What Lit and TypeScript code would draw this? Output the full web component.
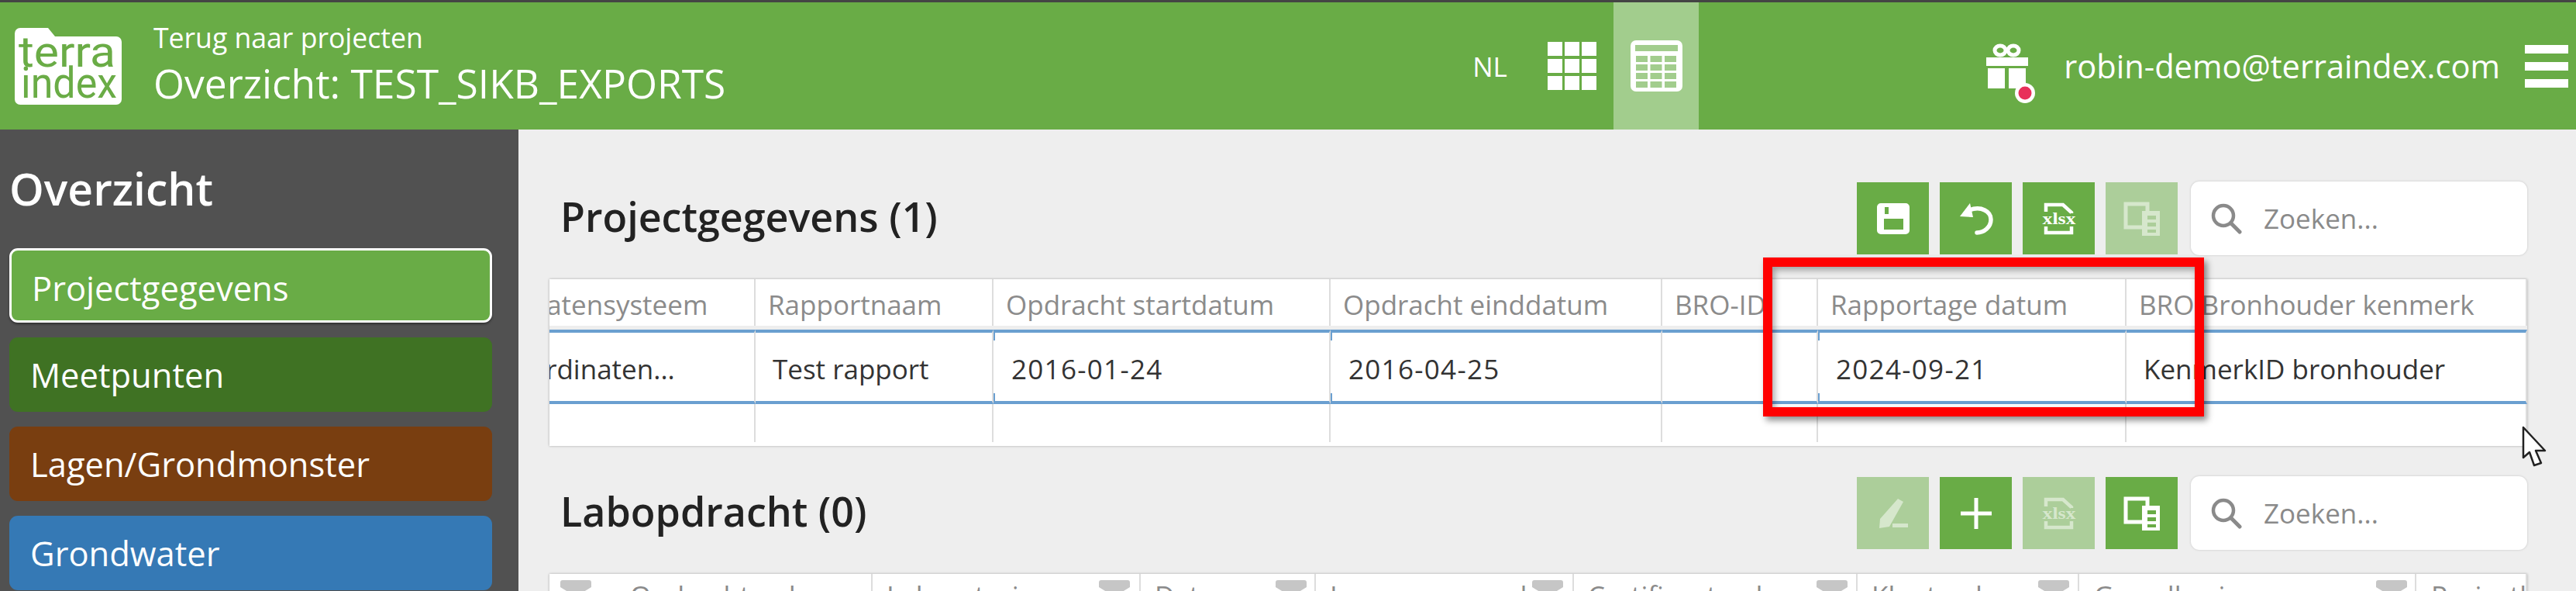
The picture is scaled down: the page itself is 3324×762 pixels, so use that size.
import { LitElement, html, css, svg } from "lit";
import { customElement } from "lit/decorators.js";

const saveIcon = svg`<svg class="ic" width="44" height="42" viewBox="0 0 44 42"><path fill="currentColor" fill-rule="evenodd" d="M6 1h32a5 5 0 0 1 5 5v30a5 5 0 0 1-5 5H6a5 5 0 0 1-5-5V6a5 5 0 0 1 5-5zM11 6v9h5V6zM10 21v14h25V21z"/></svg>`;
const undoIcon = svg`<svg class="ic" width="44" height="42" viewBox="0 0 44 42"><path fill="none" stroke="currentColor" stroke-width="5.5" stroke-linecap="round" d="M13 10C29 4 41 12 41 22 41 32 32 39 23 39"/><path fill="currentColor" d="M1 18 14 1l4 18z"/></svg>`;
const xlsxIcon = svg`<svg class="ic" width="46" height="44" viewBox="0 0 46 44"><path fill="none" stroke="currentColor" stroke-width="4.5" d="M6 13V4h22l11 10v1M6 32v8h33v-8"/><text x="23" y="29" text-anchor="middle" textLength="43" lengthAdjust="spacingAndGlyphs" font-family="'Liberation Serif',serif" font-weight="700" font-size="22" fill="currentColor">xlsx</text></svg>`;
const copyIcon = svg`<svg class="ic" width="48" height="44" viewBox="0 0 48 44"><path fill="none" stroke="currentColor" stroke-width="5" d="M27 33H3V3h28v10"/><path fill="currentColor" fill-rule="evenodd" d="M24 12h23v32H24zM31 18v5h11v-5zM31 27v5h11v-5zM31 36v4h11v-4z"/></svg>`;
const plusIcon = svg`<svg class="ic" width="42" height="42" viewBox="0 0 42 42"><path fill="none" stroke="currentColor" stroke-width="5" d="M21 1v40M1 21h40"/></svg>`;
const penIcon = svg`<svg class="ic" width="42" height="40" viewBox="0 0 42 40"><path fill="currentColor" d="M27 1l7 4-18 32-13 2 1-12zM20 33h20v5H20z"/></svg>`;

const grid = svg`<svg class="nav-ic" width="63" height="62" viewBox="0 0 63 62" fill="#fff">${[0, 1, 2].map((r) => [0, 1, 2].map((c) => svg`<rect x=${c * 22} y=${r * 22} width="19" height="18"/>`))}</svg>`;
const tableIc = svg`<svg class="nav-ic" width="67" height="66" viewBox="0 0 67 66"><rect width="67" height="66" rx="7" fill="#fff"/><rect x="6" y="6" width="55" height="8" fill="#a2cd8d"/>${[0, 1, 2, 3].map((r) => [0, 1, 2].map((c) => svg`<rect x=${7 + c * 18.5} y=${20 + r * 11} width="15" height="8" fill="#a2cd8d"/>`))}</svg>`;
const gift = svg`<svg width="66" height="78" viewBox="0 0 66 78"><g fill="none" stroke="#fff" stroke-width="5"><ellipse cx="18" cy="9" rx="7" ry="6"/><ellipse cx="35" cy="9" rx="7" ry="6"/></g><path fill="#fff" d="M0 18h54v11H0zM2 32h22v26H2zM29 32h22v26H29z"/><circle cx="50" cy="64" r="13" fill="#fff"/><circle cx="50" cy="64" r="8.5" fill="#e8305a"/></svg>`;
const logo = svg`<svg width="138" height="99" viewBox="0 0 138 99"><path fill="#fff" d="M7 0h36l9 11h79a7 7 0 0 1 7 7v74a7 7 0 0 1-7 7H7a7 7 0 0 1-7-7V7a7 7 0 0 1 7-7z"/><g fill="#6aac46" font-family="Roboto,sans-serif" font-size="55"><text x="5" y="50" textLength="125" lengthAdjust="spacingAndGlyphs">terra</text><text x="8" y="90" textLength="124" lengthAdjust="spacingAndGlyphs">index</text></g></svg>`;
const searchIc = svg`<svg width="44" height="40" viewBox="0 0 44 40"><circle cx="18" cy="16" r="13" fill="none" stroke="#8a8a8a" stroke-width="4.5"/><path stroke="#8a8a8a" stroke-width="5" stroke-linecap="round" d="M28 26l11 11"/></svg>`;
const funnel = svg`<svg class="funnel" width="40" height="40" viewBox="0 0 40 40"><path fill="#c6c6c6" d="M3 0h34a3 3 0 0 1 3 3v6L27 17v23H13V17L0 9V3a3 3 0 0 1 3-3z"/></svg>`;
const cursor = svg`<svg class="cursor" width="34" height="54" viewBox="0 0 34 54"><path fill="#fff" stroke="#222" stroke-width="2.5" stroke-linejoin="round" d="M2 2v39l8-7 6 17 9-3-7-16h12z"/></svg>`;

const t1Cols = [416, 307, 435, 428, 201, 398, 517];
const t1Head = ["Coördinatensysteem", "Rapportnaam", "Opdracht startdatum", "Opdracht einddatum", "BRO-ID", "Rapportage datum", "BRO Bronhouder kenmerk"];
const t1Row = ["Coördinaten...", "Test rapport", "2016-01-24", "2016-04-25", "", "2024-09-21", "KenmerkID bronhouder"];
const t1Kind = ["first", "", "date", "date", "", "date", ""];

const t2Cols = [417, 346, 226, 333, 366, 286, 435, 143];
const t2Head = ["Opdrachtcode", "Laboratorium", "Datum", "Lagen en grondmonsters", "Certificaatcode", "Klantcode", "Grondboring", "Projectleider"];
const t2Text = [104, 18, 18, 18, 18, 18, 19, 19];
const t2Funnel = [14, 292, 174, 279, 313, 233, 383, null];

const colStyle = (c: number[]) => `grid-template-columns:${c.map((v) => v + "px").join(" ")}`;

@customElement("app-root")
export class AppRoot extends LitElement {
  static styles = css`
    :host { display: block; width: 3324px; height: 762px; overflow: hidden; position: relative; background: #444; padding-top: 3px; box-sizing: border-box; font-family: "Open Sans", sans-serif; color: #222; }
    .top { height: 164px; background: #69ac46; display: flex; align-items: center; color: #fff; padding: 0 10px 0 19px; }
    .brand { flex: 1; display: flex; align-items: center; gap: 41px; }
    .logo { display: flex; }
    .titles { display: flex; flex-direction: column; }
    .back { font-size: 35.6px; line-height: 50px; margin-top: -8px; }
    .title { font-size: 51.5px; line-height: 64px; margin-top: 2px; }
    .nl { font-size: 35px; width: 46px; margin-right: 51px; }
    .nav-ic { display: block; }
    .grid-wrap { margin-right: 22px; display: flex; }
    .active { align-self: stretch; width: 110px; background: #a2cd8d; display: flex; align-items: center; justify-content: center; margin-right: 371px; }
    .gift { display: flex; margin-top: 19px; margin-right: 37px; }
    .mail { font-size: 41.6px; margin-left: -3px; margin-right: 32px; white-space: nowrap; }
    .burger { width: 56px; display: flex; flex-direction: column; gap: 11px; }
    .burger i { display: block; height: 11px; background: #fff; }
    .body { display: flex; height: 595px; }
    .side { width: 669px; flex: none; background: #515151; box-sizing: border-box; padding: 38px 34px 0 12px; display: flex; flex-direction: column; }
    .side h2 { margin: 0 0 38px; font-size: 57px; font-weight: 600; line-height: 77px; color: #fff; }
    .item { flex: none; height: 96px; border-radius: 11px; margin-bottom: 19px; display: flex; align-items: center; padding-left: 27px; color: #fff; font-size: 43.5px; box-sizing: border-box; }
    .item.sel { background: #69ac46; border: 3px solid #fff; padding: 6px 0 0 26px; box-shadow: 0 2px 3px rgba(0,0,0,.4); }
    .c1 { background: #3f7223; }
    .c2 { background: #793e10; }
    .c3 { background: #3579b5; }
    .main { flex: 1; min-width: 0; background: #eee; padding: 67px 63px 0 40px; }
    .head { display: flex; align-items: center; height: 95px; margin-bottom: 31px; }
    .head h3 { flex: 1; margin: 0 0 6px; padding-left: 14px; font-size: 52px; font-weight: 600; color: #222; }
    .btns { display: flex; gap: 14px; margin-right: 17px; }
    .btn { width: 93px; height: 93px; background: #69ac46; color: #fff; display: flex; align-items: center; justify-content: center; }
    .btn.off { background: #acce9a; color: #d6e7cc; }
    .ic { display: block; }
    .search { width: 434px; height: 95px; box-sizing: border-box; background: #fff; border-radius: 11px; box-shadow: 0 0 3px rgba(0,0,0,.18); display: flex; align-items: center; padding-left: 24px; gap: 26px; color: #8a8a8a; font-size: 35px; }
    .search svg { flex: none; }
    .table { background: #fff; box-shadow: 0 0 3px rgba(0,0,0,.3); overflow: hidden; }
    .t1 { height: 215px; margin-bottom: 39px; }
    .t2 { height: 60px; }
    .rows { margin-left: -150px; }
    .hrow, .drow, .erow { display: grid; }
    .hrow > div { height: 60px; border-right: 2px solid #ddd; box-sizing: border-box; padding: 8px 0 0 16px; font-size: 35px; line-height: 50px; color: #8b8b8b; white-space: nowrap; overflow: hidden; }
    .t1 .hrow { border-bottom: 5px solid #eee; }
    .drow > div { position: relative; height: 96px; box-sizing: border-box; border-top: 4px solid #6a9fd0; border-bottom: 4px solid #6a9fd0; border-right: 2px solid #ddd; padding: 4px 0 0 22px; display: flex; align-items: center; font-size: 35px; color: #333; white-space: nowrap; }
    .drow > div.first { padding-left: 81px; }
    .drow > div.date { padding-left: 23px; letter-spacing: 1.3px; }
    .drow > div.date::before, .drow > div.date::after { content: ""; position: absolute; left: 0; width: 2px; height: 10px; background: #6a9fd0; }
    .drow > div.date::before { top: 0; }
    .drow > div.date::after { bottom: 0; }
    .erow > div { height: 49px; border-right: 2px solid #ddd; box-sizing: border-box; }
    .t2 .hrow > div { position: relative; padding-top: 3px; }
    .fpos { position: absolute; top: 0; }
    .funnel { display: block; margin-top: 8px; }
    .red { position: absolute; left: 2275px; top: 332px; width: 569px; height: 205px; box-sizing: border-box; border: 12px solid #f00; box-shadow: 4px 5px 8px rgba(0,0,0,.45), inset 3px 4px 8px rgba(0,0,0,.35); pointer-events: none; }
    .cursor { position: absolute; left: 3254px; top: 549px; }
  `;

  private btn(icon: unknown, off = false) {
    return html`<div class="btn ${off ? "off" : ""}">${icon}</div>`;
  }

  private search() {
    return html`<div class="search">${searchIc}<span>Zoeken...</span></div>`;
  }

  render() {
    return html`
      <header class="top">
        <div class="brand">
          <div class="logo">${logo}</div>
          <div class="titles">
            <div class="back">Terug naar projecten</div>
            <div class="title">Overzicht: TEST_SIKB_EXPORTS</div>
          </div>
        </div>
        <div class="nl">NL</div>
        <div class="grid-wrap">${grid}</div>
        <div class="active">${tableIc}</div>
        <div class="gift">${gift}</div>
        <div class="mail">robin-demo@terraindex.com</div>
        <div class="burger"><i></i><i></i><i></i></div>
      </header>
      <div class="body">
        <aside class="side">
          <h2>Overzicht</h2>
          <div class="item sel">Projectgegevens</div>
          <div class="item c1">Meetpunten</div>
          <div class="item c2">Lagen/Grondmonster</div>
          <div class="item c3">Grondwater</div>
        </aside>
        <main class="main">
          <div class="head">
            <h3>Projectgegevens (1)</h3>
            <div class="btns">
              ${this.btn(saveIcon)}${this.btn(undoIcon)}${this.btn(xlsxIcon)}${this.btn(copyIcon, true)}
            </div>
            ${this.search()}
          </div>
          <div class="table t1">
            <div class="rows">
              <div class="hrow" style=${colStyle(t1Cols)}>${t1Head.map((h) => html`<div>${h}</div>`)}</div>
              <div class="drow" style=${colStyle(t1Cols)}>${t1Row.map((c, i) => html`<div class=${t1Kind[i]}>${c}</div>`)}</div>
              <div class="erow" style=${colStyle(t1Cols)}>${t1Cols.map(() => html`<div></div>`)}</div>
            </div>
          </div>
          <div class="head">
            <h3>Labopdracht (0)</h3>
            <div class="btns">
              ${this.btn(penIcon, true)}${this.btn(plusIcon)}${this.btn(xlsxIcon, true)}${this.btn(copyIcon)}
            </div>
            ${this.search()}
          </div>
          <div class="table t2">
            <div class="hrow" style=${colStyle(t2Cols)}>
              ${t2Head.map((h, i) => html`<div style="padding-left:${t2Text[i]}px">${t2Funnel[i] !== null ? html`<span class="fpos" style="left:${t2Funnel[i]}px">${funnel}</span>` : ""}${h}</div>`)}
            </div>
          </div>
        </main>
      </div>
      <div class="red"></div>
      ${cursor}
    `;
  }
}
